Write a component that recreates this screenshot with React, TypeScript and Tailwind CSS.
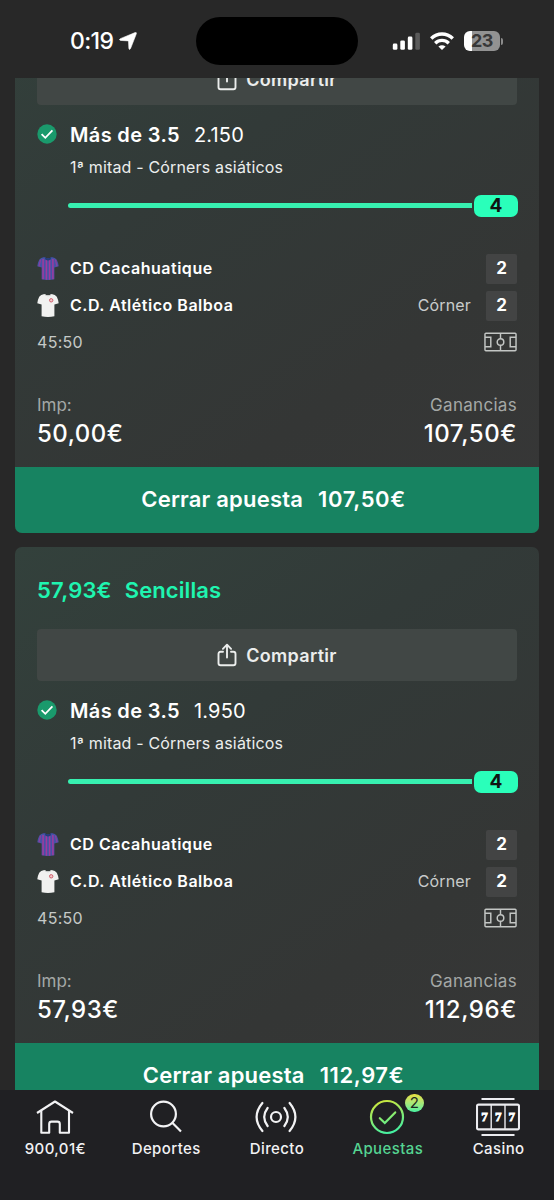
import type { ReactNode } from "react";

type Bet = {
  stake: string;
  odds: string;
  returns: string;
  cashOut: string;
};

const bets: Bet[] = [
  { stake: "50,00€", odds: "2.150", returns: "107,50€", cashOut: "107,50€" },
  { stake: "57,93€", odds: "1.950", returns: "112,96€", cashOut: "112,97€" },
];

const SHIRT = "M7.4 1 Q3.6 1.6 2.2 3.8 Q0.8 6.6 0.3 10.2 L4.6 11.6 V23.2 Q11 24.8 17.4 23.2 V11.6 L21.7 10.2 Q21.2 6.6 19.8 3.8 Q18.4 1.6 14.6 1 Q11 3.6 7.4 1 Z";

function StripedShirt() {
  return (
    <svg width="22" height="25" viewBox="0 0 22 25">
      <path d={SHIRT} fill="#4653a6" />
      <path d="M6.1 3 V23.3 M9.4 4 V23.8 M12.6 4 V23.8 M15.9 3 V23.3" stroke="#a03a9e" strokeWidth="1.5" />
      <path d="M3.6 3.6 L2 10.4 M18.4 3.6 L20 10.4" stroke="#8a3f9e" strokeWidth="1.3" />
      <path d="M7.4 1 Q11 3.6 14.6 1 L13.4 3.8 Q11 5.4 8.6 3.8 Z" fill="#263c78" />
    </svg>
  );
}

function WhiteShirt() {
  return (
    <svg width="22" height="25" viewBox="0 0 22 25">
      <path d={SHIRT} fill="#f1f1f0" />
      <path d="M7.4 1 Q11 3.6 14.6 1 L14 2.3 Q11 4.4 8 2.3 Z" fill="#c9cccb" />
      <circle cx="14.2" cy="7.3" r="1.7" fill="#f3c6ca" stroke="#d0606c" strokeWidth="1" />
    </svg>
  );
}

function ShareIcon() {
  return (
    <svg width="20" height="24" viewBox="0 0 20 24" fill="none" stroke="#ebedec" strokeWidth="1.9" strokeLinecap="round" strokeLinejoin="round">
      <path d="M6 8.8 H3.6 Q1.5 8.8 1.5 10.9 V20.2 Q1.5 22.3 3.6 22.3 H16.4 Q18.5 22.3 18.5 20.2 V10.9 Q18.5 8.8 16.4 8.8 H14" />
      <path d="M10 14.6 V2 M5.9 5.8 L10 1.7 L14.1 5.8" />
    </svg>
  );
}

function PitchIcon() {
  return (
    <svg width="33" height="20" viewBox="0 0 34 20" fill="none" stroke="#c3c6c4" strokeWidth="1.5">
      <rect x="1" y="1" width="32" height="18" rx="1" />
      <path d="M1 5.2 H7 V14.8 H1 M33 5.2 H27 V14.8 H33 M17 1 V6.6 M17 13.4 V19" />
      <circle cx="17" cy="10" r="3.4" />
    </svg>
  );
}

function TeamRow({ shirt, name, label }: { shirt: ReactNode; name: string; label?: string }) {
  return (
    <div className="flex h-[30px] items-center">
      <span className="w-[33px]">{shirt}</span>
      <span className="pb-[2px] text-[16px] font-semibold tracking-[0.52px]">{name}</span>
      {label && <span className="ml-auto pb-[2px] text-[16px] tracking-[0.15px] text-[#c9cccb]">{label}</span>}
      <span className={`${label ? "ml-[15px]" : "ml-auto"} flex h-[30px] w-[31px] items-center justify-center rounded-[2px] bg-[#434444] pt-px text-[17px] font-bold`}>2</span>
    </div>
  );
}

function BetCard({ bet }: { bet: Bet }) {
  return (
    <article className="overflow-hidden rounded-[7px] bg-[linear-gradient(145deg,#33413c_0%,#323a38_35%,#343635_70%,#373737_100%)]">
      <div className="px-[22px]">
        <h2 className="flex h-[81.5px] items-center gap-[13px] pt-[6px] text-[22px] font-semibold text-[#1ff5b0]">
          <span className="tracking-[0.2px]">{bet.stake}</span>
          <span className="tracking-[0.1px]">Sencillas</span>
        </h2>

        <button className="flex h-[52px] w-full items-center justify-center gap-[9px] rounded-[4px] bg-[#414745] pt-px text-[18px] font-semibold tracking-[0.3px] text-[#ebedec]">
          <ShareIcon />
          Compartir
        </button>

        <div className="mt-[14px] flex h-[30px] items-center">
          <svg width="20" height="20" viewBox="0 0 20 20" className="mr-[13px]">
            <circle cx="10" cy="10" r="9.7" fill="#1a9a6c" />
            <path d="M4.6 10.1 L8.3 13.8 L15.4 6.4" fill="none" stroke="#fff" strokeWidth="1.8" />
          </svg>
          <span className="pt-[2px] text-[20px] font-semibold tracking-[0.35px]">Más de 3.5</span>
          <span className="ml-[14px] pt-[2px] text-[20px] font-normal tracking-[0.2px]">{bet.odds}</span>
        </div>
        <p className="mt-[5px] pl-[33px] text-[16px] leading-[26px] tracking-[0.17px] text-[#eceeed]">1ª mitad - Córners asiáticos</p>

        <div className="mt-[15px] -mr-[1px] flex h-[22px] items-center pl-[31px]">
          <div className="h-[5px] flex-1 rounded-l-full bg-[#37f0b0]" />
          <span className="ml-[2px] flex h-[22px] w-[44px] items-center justify-center rounded-[7px] bg-[#2affba] pt-[2px] text-[19px] font-bold text-[#101512]">4</span>
        </div>

        <div className="mt-[37px] flex flex-col gap-[7px]">
          <TeamRow shirt={<StripedShirt />} name="CD Cacahuatique" />
          <TeamRow shirt={<WhiteShirt />} name="C.D. Atlético Balboa" label="Córner" />
        </div>

        <div className="mt-2 flex h-[26px] items-center justify-between">
          <span className="text-[16px] tracking-[0.3px] text-[#c5c9c7]">45:50</span>
          <PitchIcon />
        </div>

        <div className="mt-9 flex justify-between">
          <div>
            <p className="pt-[2px] text-[17px] leading-[25px] text-[#a4a8a6]">Imp:</p>
            <p className="text-[24px] font-medium leading-8 tracking-[0.5px]">{bet.stake}</p>
          </div>
          <div className="text-right">
            <p className="pt-[2px] text-[17px] leading-[25px] tracking-[0.3px] text-[#a4a8a6]">Ganancias</p>
            <p className="text-[24px] font-medium leading-8 tracking-[0.6px]">{bet.returns}</p>
          </div>
        </div>
      </div>

      <button className="mt-[17px] flex h-[66px] w-full items-center justify-center gap-[15px] bg-[#178361] pr-[7px] text-[22px] font-semibold">
        <span className="tracking-[0.2px]">Cerrar apuesta</span>
        <span className="tracking-[0.6px]">{bet.cashOut}</span>
      </button>
    </article>
  );
}

function StatusBar() {
  return (
    <header className="flex h-[78px] shrink-0 items-center pt-1">
      <div className="flex w-[196px] items-center gap-[6px] pl-[70px]">
        <span className="text-[23px] font-medium leading-8 tracking-[-0.6px]">0:19</span>
        <svg width="18" height="18" viewBox="0 0 19 19" fill="#fff">
          <path d="M17 0.6 Q18.8 0.1 18.3 1.9 L12.2 17.5 Q10.9 19.6 10.4 17.3 L10 9.4 L1.6 8.9 Q-0.6 8.2 1.4 7 Z" stroke="#fff" strokeWidth="0.6" />
        </svg>
      </div>
      <div className="h-[48px] w-[162px] rounded-full bg-black" />
      <div className="ml-[34px] flex items-center">
        <svg width="28" height="18" viewBox="0 0 28 18" fill="#fff">
          <rect x="0.8" y="11.6" width="4.6" height="6.2" rx="1.4" />
          <rect x="8.3" y="8.4" width="4.6" height="9.4" rx="1.4" />
          <rect x="15.8" y="4.6" width="4.6" height="13.2" rx="1.4" />
          <rect x="23.3" y="0.8" width="4.6" height="17" rx="1.4" fill="#5a5a5a" />
        </svg>
        <svg width="24" height="18" viewBox="0 0 24 18" fill="none" stroke="#fff" strokeWidth="3.4" className="ml-[10px]">
          <path d="M1.2 6.6 Q6 2 12 2 T22.8 6.6" />
          <path d="M5.2 11.2 Q8.2 8.4 12 8.4 T18.8 11.2" />
          <path d="M12 18 L8.4 14.6 Q12 11.8 15.6 14.6 Z" fill="#fff" stroke="none" />
        </svg>
        <div className="ml-[10px] flex h-[20px] w-[36px] items-center justify-center rounded-[6px] bg-[linear-gradient(90deg,#fff_23%,#929292_23%)] text-[18px] font-bold leading-5 tracking-[-0.6px] text-[#383838]">23</div>
        <div className="ml-[1px] h-[7px] w-[2px] rounded-r-full bg-[#8b8b8b]" />
      </div>
    </header>
  );
}

const navIcons = {
  home: (
    <svg width="38" height="36" viewBox="0 0 38 36" fill="none" stroke="#f2f2f4" strokeWidth="2.1" strokeLinejoin="round">
      <path d="M1 14 L19 2.5 L37 14" />
      <path d="M5.3 12 V33.8 H13.2 V25 Q13.2 22.6 15.6 22.6 H21.4 Q23.8 22.6 23.8 25 V33.8 H33 V12" />
    </svg>
  ),
  search: (
    <svg width="34" height="36" viewBox="0 0 34 36" fill="none" stroke="#f2f2f4" strokeWidth="2.2" className="-ml-px">
      <circle cx="14.5" cy="15" r="12.4" />
      <path d="M23.3 23.8 L32 32.5" />
    </svg>
  ),
  live: (
    <svg width="42" height="36" viewBox="0 0 42 36" fill="none" stroke="#f2f2f4" strokeWidth="2.2" strokeLinecap="round" className="-ml-px">
      <circle cx="21" cy="18" r="5" />
      <path d="M12.6 9 Q5.8 18 12.6 27 M29.4 9 Q36.2 18 29.4 27 M7.4 4 Q-4.2 18 7.4 32 M34.6 4 Q46.2 18 34.6 32" />
    </svg>
  ),
  bets: (
    <svg width="36" height="36" viewBox="0 0 36 36" fill="none" stroke="url(#neon)" strokeWidth="2.2" className="-ml-[2px]">
      <defs>
        <linearGradient id="neon" gradientUnits="userSpaceOnUse" x1="12" y1="1" x2="22" y2="35">
          <stop stopColor="#cfe83c" />
          <stop offset="1" stopColor="#3ff0a6" />
        </linearGradient>
      </defs>
      <circle cx="18" cy="18" r="16" />
      <path d="M10.8 19.2 L15.8 24 L26.2 13.4" strokeLinecap="round" />
    </svg>
  ),
  casino: (
    <svg width="44" height="38" viewBox="0 0 44 38" fill="none" stroke="#ececf0" strokeWidth="1.8" className="-ml-[2px]">
      <path d="M5.5 1 H38.5 M5.5 37 H38.5" />
      <rect x="1" y="6.6" width="42" height="24.8" rx="1.5" strokeWidth="2.1" />
      <path d="M15.2 7 V31 M29 7 V31" strokeWidth="1.4" />
      <g fill="#fff" stroke="#fff" strokeWidth="0.8" fontFamily="Liberation Serif, serif" fontSize="13" fontWeight="bold" textAnchor="middle">
        <text x="8.5" y="23.2">7</text>
        <text x="22.2" y="23.2">7</text>
        <text x="35.8" y="23.2">7</text>
      </g>
    </svg>
  ),
};

const navItems: { icon: keyof typeof navIcons; label: string; badge?: number }[] = [
  { icon: "home", label: "900,01€" },
  { icon: "search", label: "Deportes" },
  { icon: "live", label: "Directo" },
  { icon: "bets", label: "Apuestas", badge: 2 },
  { icon: "casino", label: "Casino" },
];

export default function App() {
  return (
    <div className="flex h-[1200px] w-[554px] flex-col overflow-hidden bg-[#282828] font-['Inter',sans-serif] text-white">
      <StatusBar />

      <main className="h-[1012px] shrink-0 overflow-hidden px-[15px]">
        <div className="-mt-[107px] flex flex-col gap-[14.5px]">
          {bets.map((bet) => (
            <BetCard key={bet.stake} bet={bet} />
          ))}
        </div>
      </main>

      <nav className="grid h-[110px] shrink-0 grid-cols-5 bg-[#202023] pt-[8px]">
        {navItems.map(({ icon, label, badge }) => (
          <div key={label} className="flex flex-col items-center">
            <div className="relative flex h-[38px] items-center">
              {navIcons[icon]}
              {badge && (
                <span className="absolute -top-[4px] left-[34px] flex h-[18px] w-[19px] items-center justify-center rounded-full bg-gradient-to-b from-[#e6de3c] to-[#3ff0a0] text-[15px] leading-[18px] text-[#1d2a20]">
                  {badge}
                </span>
              )}
            </div>
            <span className={`mt-[3px] text-[15px] font-medium leading-5 tracking-[0.4px] ${badge ? "text-[#55d492]" : "text-[#f2f2f4]"}`}>{label}</span>
          </div>
        ))}
      </nav>
    </div>
  );
}
